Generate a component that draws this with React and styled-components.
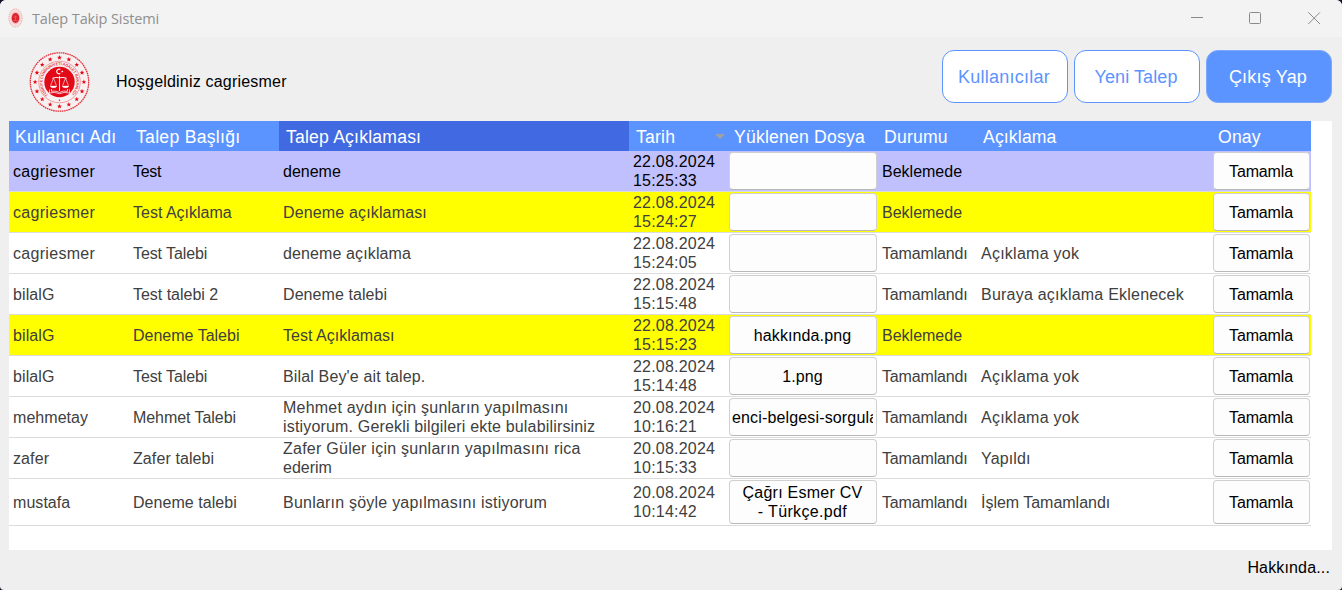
import React from 'react';
import styled, { createGlobalStyle } from 'styled-components';

const Global = createGlobalStyle`
  * { box-sizing: border-box; }
  html, body { margin: 0; background: #17102a; }
  body { font-family: "Liberation Sans", Arial, sans-serif; font-size: 16px; }
  button { font: inherit; margin: 0; }
`;

const Window = styled.div`
  width: 1342px;
  height: 590px;
  display: flex;
  flex-direction: column;
  background: #efefef;
  border-radius: 6px 6px 4px 4px;
  overflow: hidden;
`;

const TitleBar = styled.header`
  height: 37px;
  flex: none;
  display: flex;
  align-items: center;
  padding-left: 8px;
  background: #f3f3f3;
`;

const Title = styled.span`
  flex: 1;
  margin-left: 9px;
  font-family: "Open Sans", "Noto Sans", sans-serif;
  font-size: 14.5px;
  letter-spacing: ${p => p.$t}px;
  color: #8f8f8f;
`;

const WindowControls = styled.div`
  display: flex;
  gap: 46px;
  margin-right: 21px;
`;

const TopBar = styled.div`
  height: 84px;
  flex: none;
  display: flex;
  align-items: flex-start;
  padding: 13px 10px 0 29px;
`;

const Seal = styled.svg`
  display: block;
  flex: none;
  margin-top: ${p => p.$top || 0}px;
`;

const Welcome = styled.div`
  flex: 1;
  margin: 22px 0 0 26px;
  line-height: 19px;
  color: #000;
  letter-spacing: ${p => p.$t}px;
`;

const Actions = styled.div`
  display: flex;
  gap: 6px;
`;

const ActionButton = styled.button`
  width: 126px;
  height: 53px;
  padding: 1px 2px 0 0;
  border: 1px solid ${p => (p.$solid ? '#7ba7fd' : '#5c94ff')};
  border-radius: 12px;
  background: ${p => (p.$solid ? '#5c94ff' : '#fff')};
  color: ${p => (p.$solid ? '#fff' : '#5c94ff')};
  font-size: 18px;
  letter-spacing: ${p => p.$t || 0}px;
`;

const Grid = styled.main`
  flex: none;
  width: 1323px;
  height: 429px;
  margin-left: 9px;
  background: #fff;
`;

const Row = styled.div`
  display: grid;
  grid-template-columns: 120px 150px 350px 100px 149px 99px 235px 99px;
  width: 1302px;
  height: ${p => p.$h}px;
`;

const HeadRow = styled(Row)`
  background: #5c94ff;
`;

const HeadCell = styled.div`
  display: flex;
  align-items: center;
  padding: 2px 4px 0 ${p => p.$pad || 6}px;
  background: ${p => (p.$active ? '#4169e1' : 'transparent')};
  color: #fff;
  font-size: 17.6px;
  letter-spacing: ${p => p.$t || 0}px;
  white-space: nowrap;
`;

const SortArrow = styled.svg`
  margin-left: auto;
`;

const tones = {
  selected: ['#c0c0ff', '#000'],
  pending: ['#ffff00', '#404040'],
  plain: ['#fff', '#404040'],
};

const BodyRow = styled(Row)`
  border-bottom: 1px solid #dcdcdc;
  background: ${p => tones[p.$tone][0]};
  color: ${p => tones[p.$tone][1]};
`;

const Cell = styled.div`
  display: flex;
  flex-direction: column;
  justify-content: center;
  align-items: flex-start;
  min-width: 0;
  padding-left: 4px;
  line-height: 19px;
`;

const Line = styled.span`
  white-space: nowrap;
  letter-spacing: ${p => p.$t || 0}px;
`;

const ButtonCell = styled.div`
  display: flex;
  min-width: 0;
  padding: ${p => (p.$file ? '1px 1px 1px 0' : '1px')};
`;

const CellButton = styled.button`
  display: flex;
  flex-direction: column;
  align-items: center;
  justify-content: center;
  width: 100%;
  min-width: 0;
  padding: 0 3px 0 2px;
  overflow: hidden;
  border: 1px solid #d0d0d0;
  border-bottom-color: #b8b8b8;
  border-radius: 4px;
  background: #fdfdfd;
  color: #000;
  line-height: 19px;
`;

const Clip = styled.span`
  display: flex;
  flex-direction: column;
  align-items: ${p => (p.$long ? 'flex-start' : 'center')};
  width: 100%;
  overflow: hidden;
`;

const Footer = styled.footer`
  display: flex;
  justify-content: flex-end;
  padding: 8px 12px 0 0;
  line-height: 19px;
  color: #000;
`;

const RED = '#e30a17';

const star = (cx, cy, r) =>
  Array.from({ length: 10 }, (_, i) => {
    const a = (i * Math.PI) / 5 - Math.PI / 2;
    const q = i % 2 ? r * 0.42 : r;
    return `${(cx + q * Math.cos(a)).toFixed(2)},${(cy + q * Math.sin(a)).toFixed(2)}`;
  }).join(' ');

function MinistrySeal() {
  return (
    <Seal width="61" height="62" viewBox="0 0 61 62" $top={1}>
      <circle cx="30.5" cy="31" r="29.2" fill="#f6f0f0" stroke={RED} strokeWidth="1.3" strokeOpacity=".85" strokeDasharray="1.6 .6" />
      {Array.from({ length: 16 }, (_, i) => {
        const a = (i * Math.PI) / 8;
        return <polygon key={i} points={star(30.5 + 24.4 * Math.sin(a), 31 - 24.4 * Math.cos(a), 2.5)} fill={RED} />;
      })}
      <circle cx="30.5" cy="31" r="20.8" fill="none" stroke={RED} strokeWidth=".6" strokeOpacity=".6" />
      <defs>
        <path id="ring" d="M19.2 43.800A17 17 0 1 1 41.800 43.800" />
      </defs>
      <text fill={RED} fillOpacity=".85" fontSize="3.9" fontWeight="700" fontFamily="Liberation Sans, sans-serif">
        <textPath href="#ring" textLength="80">TÜRKİYE CUMHURİYETİ ADALET BAKANLIĞI</textPath>
      </text>
      <circle cx="30.5" cy="49.3" r=".7" fill={RED} />
      <circle cx="30.5" cy="31" r="15.2" fill={RED} />
      <g fill="none" stroke="#fff" strokeWidth=".9">
        <path d="M31.3 18.4a2.4 2.4 0 1 0 0 4.2" strokeWidth="1.1" />
        <path d="M23.4 27.2q3.6 -1.4 7.1 -.4q3.500 -1 7.100 .4M30.500 25v15" />
        <path d="M24.500 27l-2.900 7.600M24.500 27l2.900 7.600M36.500 27l-2.900 7.600M36.500 27l2.900 7.600" strokeWidth=".6" />
        <path d="M21.300 35a3.200 1.800 0 0 0 6.400 0zM33.300 35a3.200 1.800 0 0 0 6.400 0z" fill="#fff" strokeWidth=".3" />
        <path d="M20.500 38.500v3.500q5.500 -1.500 10 .700q4.500 -2.200 10 -.700v-3.500M22.500 38v2.300q4.600 -.900 8 1.200q3.400 -2.100 8 -1.200v-2.300" strokeWidth=".75" />
      </g>
      <polygon points={star(33.2, 20.5, 1.3)} fill="#fff" />
    </Seal>
  );
}

function TitleIcon() {
  return (
    <Seal width="15" height="20" viewBox="0 0 15 20" $top={-1}>
      <ellipse cx="7.500" cy="10" rx="6.600" ry="9" fill="#f8dfe0" stroke="#f0a5a9" strokeWidth="1" strokeDasharray="1.500 .8" />
      <ellipse cx="7.500" cy="10" rx="4.700" ry="6.500" fill="#f5c0c3" />
      <ellipse cx="7.500" cy="10" rx="3.800" ry="5.100" fill="#dc2430" />
      <path d="M7.500 7.500v5M5.700 9h3.600M5.500 12.500h4" stroke="#e8656c" strokeWidth=".7" />
    </Seal>
  );
}

const columns = [
  { label: 'Kullanıcı Adı', t: 0.28 },
  { label: 'Talep Başlığı', pad: 7, t: 0.28 },
  { label: 'Talep Açıklaması', pad: 7, active: true, t: 0.2 },
  { label: 'Tarih', pad: 7, sorted: true, t: 0.2 },
  { label: 'Yüklenen Dosya', pad: 5, t: 0.2 },
  { label: 'Durumu', t: 0.2 },
  { label: 'Açıklama', t: 0.15 },
  { label: 'Onay', t: 0.2 },
];

const done = ['Tamamlandı', -0.15];
const waiting = ['Beklemede', 0];
const noNote = ['Açıklama yok', 0.25];

const rows = [
  { tone: 'selected', user: ['cagriesmer', 0.3], title: [['Test', -0.3]], text: [['deneme', 0]], time: ['22.08.2024', '15:25:33'], file: [], state: waiting },
  { tone: 'pending', user: ['cagriesmer', 0.3], title: [['Test Açıklama', 0]], text: [['Deneme açıklaması', 0.15]], time: ['22.08.2024', '15:24:27'], file: [], state: waiting },
  { tone: 'plain', user: ['cagriesmer', 0.3], title: [['Test Talebi', -0.1]], text: [['deneme açıklama', 0.12]], time: ['22.08.2024', '15:24:05'], file: [], state: done, note: noNote },
  { tone: 'plain', user: ['bilalG', 0.1], title: [['Test talebi 2', -0.02]], text: [['Deneme talebi', 0.08]], time: ['22.08.2024', '15:15:48'], file: [], state: done, note: ['Buraya açıklama Eklenecek', 0.22] },
  { tone: 'pending', user: ['bilalG', 0.1], title: [['Deneme Talebi', 0]], text: [['Test Açıklaması', 0.03]], time: ['22.08.2024', '15:15:23'], file: [['hakkında.png', 0.1]], state: waiting },
  { tone: 'plain', user: ['bilalG', 0.1], title: [['Test Talebi', -0.1]], text: [["Bilal Bey'e ait talep.", 0.15]], time: ['22.08.2024', '15:14:48'], file: [['1.png', 0.1]], state: done, note: noNote },
  { tone: 'plain', user: ['mehmetay', 0.05], title: [['Mehmet Talebi', -0.06]], text: [['Mehmet aydın için şunların yapılmasını', 0.21], ['istiyorum. Gerekli bilgileri ekte bulabilirsiniz', 0.17]], time: ['20.08.2024', '10:16:21'], long: true, file: [['enci-belgesi-sorgula', 0.15]], state: done, note: noNote },
  { tone: 'plain', user: ['zafer', 0.1], title: [['Zafer talebi', 0.1]], text: [['Zafer Güler için şunların yapılmasını rica', 0.25], ['ederim', 0]], time: ['20.08.2024', '10:15:33'], file: [], state: done, note: ['Yapıldı', 0.15] },
  { tone: 'plain', tall: true, user: ['mustafa', 0.05], title: [['Deneme talebi', 0.05]], text: [['Bunların şöyle yapılmasını istiyorum', 0.22]], time: ['20.08.2024', '10:14:42'], file: [['Çağrı Esmer CV', 0.25], ['- Türkçe.pdf', 0.35]], state: done, note: ['İşlem Tamamlandı', -0.02] },
];

const lines = list => list.map(([s, t]) => <Line key={s} $t={t}>{s}</Line>);

export default function App() {
  return (
    <>
      <Global />
      <Window>
        <TitleBar>
          <TitleIcon />
          <Title $t={-0.12}>Talep Takip Sistemi</Title>
          <WindowControls>
            <svg width="13" height="13" fill="none" stroke="#8a8a8a"><path d="M1 5.500h12" /></svg>
            <svg width="13" height="13" fill="none" stroke="#8a8a8a"><rect x=".5" y=".5" width="11" height="11" rx="1" /></svg>
            <svg width="13" height="13" fill="none" stroke="#8a8a8a"><path d="M.3 .3l11.700 11.700M12 .3l-11.700 11.700" /></svg>
          </WindowControls>
        </TitleBar>
        <TopBar>
          <MinistrySeal />
          <Welcome $t={0.2}>Hoşgeldiniz cagriesmer</Welcome>
          <Actions>
            <ActionButton $t={0.25}>Kullanıcılar</ActionButton>
            <ActionButton $t={0.1}>Yeni Talep</ActionButton>
            <ActionButton $solid $t={0.2}>Çıkış Yap</ActionButton>
          </Actions>
        </TopBar>
        <Grid>
          <HeadRow $h={30}>
            {columns.map(c => (
              <HeadCell key={c.label} $pad={c.pad} $active={c.active} $t={c.t}>
                {c.label}
                {c.sorted && <SortArrow width="10" height="6"><path d="M0 0h10L5 5z" fill="#a0a0a0" /></SortArrow>}
              </HeadCell>
            ))}
          </HeadRow>
          {rows.map((r, i) => (
            <BodyRow key={i} $h={r.tall ? 47 : 41} $tone={r.tone}>
              <Cell>{lines([r.user])}</Cell>
              <Cell>{lines(r.title)}</Cell>
              <Cell>{lines(r.text)}</Cell>
              <Cell>{lines(r.time.map(s => [s, 0.2]))}</Cell>
              <ButtonCell $file><CellButton><Clip $long={r.long}>{lines(r.file)}</Clip></CellButton></ButtonCell>
              <Cell>{lines([r.state])}</Cell>
              <Cell>{r.note && lines([r.note])}</Cell>
              <ButtonCell><CellButton>{lines([['Tamamla', -0.15]])}</CellButton></ButtonCell>
            </BodyRow>
          ))}
        </Grid>
        <Footer><Line $t={0.15}>Hakkında...</Line></Footer>
      </Window>
    </>
  );
}
